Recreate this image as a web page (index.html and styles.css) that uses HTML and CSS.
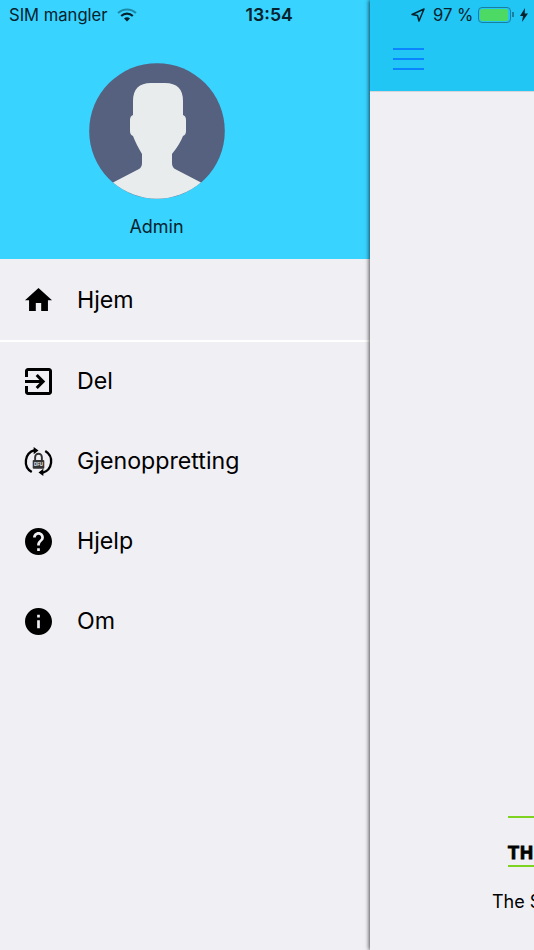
FILE: index.html
```html
<!DOCTYPE html>
<html lang="en">
<head>
    <meta charset="UTF-8">
    <meta name="viewport" content="width=device-width, initial-scale=1.0">
    <title>Admin</title>
    <link rel="stylesheet" href="styles.css">
</head>
<body>

<div class="app">
    <aside class="drawer">
        <div class="drawer-head">
            <div class="status status-left">
                <span class="carrier">SIM mangler</span>
                <svg class="wifi" viewBox="0 0 20 14" width="20" height="14">
                    <path d="M1 5a13 13 0 0 1 18 0" fill="none" stroke="#1c8aa8" stroke-width="2"/>
                    <path d="M4.200 8a8.500 8.500 0 0 1 11.600 0" fill="none" stroke="#06222c" stroke-width="2.200"/>
                    <path d="M7 10.600a4.400 4.400 0 0 1 6 0L10 13.600z" fill="#06222c"/>
                </svg>
                <span class="time">13:54</span>
            </div>
            <svg class="avatar" viewBox="0 0 136 136" width="136" height="136">
                <circle cx="68" cy="68" r="67.800" fill="#56607f"/>
                <path d="M24 119.500L50 106Q53 104 53 100V91Q47 81 44 73Q41 72 41 68V57Q41 53 44 52V38Q44 20 62 20H76Q94 20 94 38V52Q97 53 97 57V68Q97 72 94 73Q91 81 83 91V100Q83 104 86 106L112 119.500A68 68 0 0 1 24 119.500Z" fill="#e8eced"/>
            </svg>
            <div class="admin">Admin</div>
        </div>
        <nav class="menu">
            <div class="menu-row first">
                <svg class="icon" viewBox="2 1.500 20 20"><path d="M10 20v-6h4v6h5v-8h3L12 3 2 12h3v8z"/></svg>
                <span>Hjem</span>
            </div>
            <div class="menu-row">
                <svg class="icon" viewBox="3 3 18 18"><path d="M10.090 15.590L11.500 17l5-5-5-5-1.410 1.410L12.670 11H3v2h9.670l-2.580 2.590zM19 3H5c-1.110 0-2 .9-2 2v4h2V5h14v14H5v-4H3v4c0 1.100.89 2 2 2h14c1.100 0 2-.9 2-2V5c0-1.100-.9-2-2-2z"/></svg>
                <span>Del</span>
            </div>
            <div class="menu-row">
                <svg class="icon" viewBox="0 0 28 28">
                    <path d="M7 25A12.500 12.500 0 0 1 10 2.200M21 3A12.500 12.500 0 0 1 18 25.800" fill="none" stroke="#000" stroke-width="2.400"/>
                    <path d="M9 -1l5 3.500L9 6.500zM19 29l-5-3.500L19 21.500z"/>
                    <path d="M10.500 13V9.500a3.500 3.500 0 0 1 7 0V13" fill="none" stroke="#333" stroke-width="2"/>
                    <rect x="8" y="12.500" width="12" height="9" rx="1" fill="#333"/>
                    <text class="lock-text" x="14" y="19" text-anchor="middle">DFU</text>
                </svg>
                <span>Gjenoppretting</span>
            </div>
            <div class="menu-row">
                <svg class="icon" viewBox="2 2 20 20"><path d="M12 2C6.480 2 2 6.480 2 12s4.480 10 10 10 10-4.480 10-10S17.520 2 12 2zm1 17h-2v-2h2v2zm2.070-7.750l-.9.920C13.450 12.900 13 13.500 13 15h-2v-.5c0-1.100.45-2.100 1.170-2.830l1.240-1.260c.37-.36.59-.86.59-1.410 0-1.100-.9-2-2-2s-2 .9-2 2H8c0-2.210 1.790-4 4-4s4 1.790 4 4c0 .88-.36 1.680-.93 2.250z"/></svg>
                <span>Hjelp</span>
            </div>
            <div class="menu-row">
                <svg class="icon" viewBox="2 2 20 20"><path d="M12 2C6.480 2 2 6.480 2 12s4.480 10 10 10 10-4.480 10-10S17.520 2 12 2zm1 15h-2v-6h2v6zm0-8h-2V7h2v2z"/></svg>
                <span>Om</span>
            </div>
        </nav>
    </aside>

    <main class="content">
        <div class="topbar">
            <div class="status status-right">
                <svg class="arrow" viewBox="0 0 14 14" width="14" height="14">
                    <path d="M13 1L1 6.500l5.500 1L8 13z" fill="none" stroke="#06222c" stroke-width="1.500" stroke-linejoin="round"/>
                </svg>
                <span class="pct">97 %</span>
                <div class="battery"><div class="battery-fill"></div></div>
                <div class="battery-tip"></div>
                <svg class="bolt" viewBox="0 0 8 14" width="8" height="14"><path d="M5 0L0 8h3l-1 6 6-8.500H4.700z" fill="#06222c"/></svg>
            </div>
            <div class="burger">
                <div class="burger-line"></div>
                <div class="burger-line"></div>
                <div class="burger-line"></div>
            </div>
        </div>
        <div class="splash">
            <div class="green-line"></div>
            <div class="brand">THE SHIELD</div>
            <div class="green-line"></div>
            <div class="tagline">The Shield app</div>
        </div>
    </main>
</div>

</body>
</html>
```

FILE: styles.css
```css
html, body {
    margin: 0;
    padding: 0;
    height: 100%;
}

body {
    font-family: 'Inter', 'Liberation Sans', sans-serif;
    background-color: #efeff4;
    color: #000;
    overflow: hidden;
}

.app {
    display: flex;
    width: 534px;
    height: 950px;
    overflow: hidden;
}

/* left drawer */
.drawer {
    flex: 0 0 370px;
    background-color: #efeff4;
}

.drawer-head {
    display: flex;
    flex-direction: column;
    height: 259px;
    background-color: #38d3ff;
}

.status {
    display: flex;
    align-items: center;
    height: 29px;
    color: #06222c;
    font-size: 16.600px;
}

.status-left {
    padding-left: 9px;
}

.wifi {
    margin-left: 9px;
}

.time {
    margin-left: 109px;
    font-weight: 600;
    font-size: 17.700px;
}

.avatar {
    margin: 34px 0 0 89px;
}

.admin {
    margin: 17px 57px 0 0;
    text-align: center;
    font-size: 18px;
    color: #06222c;
}

.menu-row {
    display: flex;
    align-items: center;
    gap: 25px;
    height: 80px;
    padding-left: 25px;
    font-size: 23.200px;
}

.menu-row.first {
    height: 81px;
    margin-bottom: -1px;
    border-bottom: 2px solid #fff;
}

.icon {
    width: 27px;
    height: 27px;
    flex: none;
    overflow: visible;
}

.lock-text {
    font-size: 4.500px;
    font-weight: 700;
    fill: #efeff4;
}

/* right side, the page behind the drawer */
.content {
    position: relative;
    flex: 1;
    min-width: 0;
    box-shadow: -1px 0 4px rgba(0, 0, 0, 0.65);
    background-color: #efeff4;
}

.topbar {
    height: 92px;
    background-color: #22c6f5;
    border-bottom: 1px solid #d5d5da;
    box-sizing: border-box;
}

.status-right {
    padding-left: 41px;
}

.pct {
    margin-left: 8px;
}

.battery {
    margin-left: 5px;
    box-sizing: border-box;
    width: 33px;
    height: 16px;
    padding: 1px;
    border: 1px solid #1a7f9f;
    border-radius: 4px;
}

.battery-fill {
    height: 100%;
    width: 96%;
    background-color: #4cd964;
    border-radius: 2px;
}

.battery-tip {
    width: 2px;
    height: 5px;
    margin-left: 1px;
    background-color: #1a7f9f;
}

.bolt {
    margin-left: 6px;
}

.burger {
    display: flex;
    flex-direction: column;
    gap: 8px;
    width: 31px;
    margin: 19px 0 0 23px;
}

.burger-line {
    height: 2px;
    background-color: #0a84ff;
}

.splash {
    width: 300px;
    margin: 724px 0 0 138px;
}

.green-line {
    height: 2px;
    background-color: #7ed321;
}

.brand {
    margin: 25px 0 2px;
    font-family: 'Liberation Sans', sans-serif;
    font-size: 18px;
    line-height: 20px;
    font-weight: 700;
    white-space: nowrap;
    -webkit-text-stroke: 1px #000;
    letter-spacing: 1px;
}

.tagline {
    margin: 24px 0 0 -16px;
    font-size: 18px;
    line-height: 22px;
    white-space: nowrap;
}
```
